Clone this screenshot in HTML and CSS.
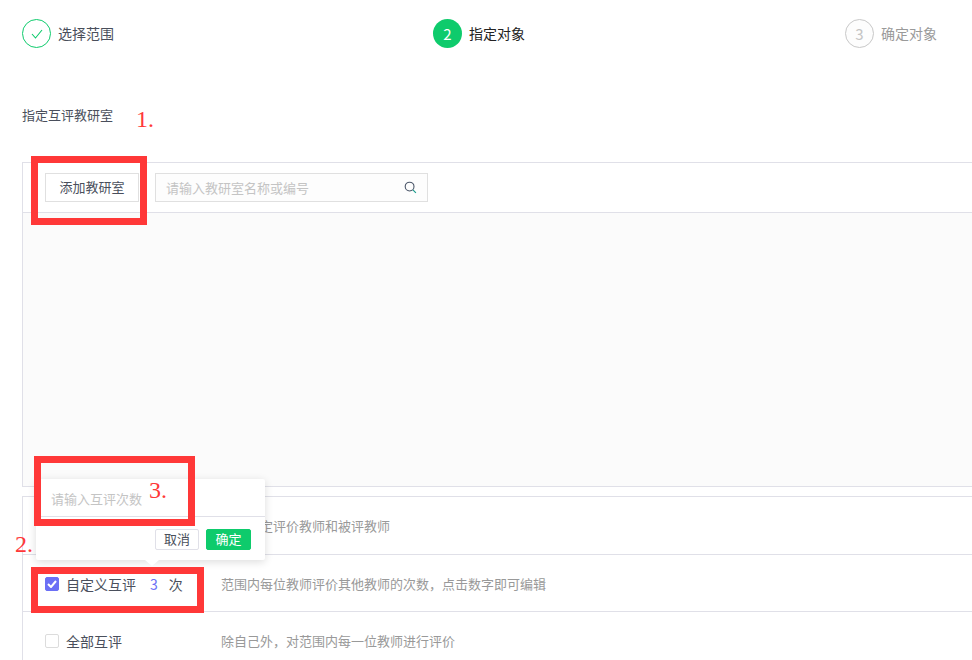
FILE: index.html
```html
<!DOCTYPE html>
<html lang="zh-CN">
<head>
    <meta charset="UTF-8">
    <meta name="viewport" content="width=device-width, initial-scale=1.0">
    <title>指定对象</title>
    <link rel="stylesheet" href="styles.css">
</head>
<body>
    <div class="page">
        <div class="steps">
            <div class="step step-done">
                <div class="step-circle">
                    <svg width="12" height="10" viewBox="0 0 12 10"><path d="M1 5l3.5 4L11 1" fill="none" stroke="#0ecb6c" stroke-width="1.1"/></svg>
                </div>
                <span class="step-label">选择范围</span>
            </div>
            <div class="step step-active">
                <div class="step-circle">2</div>
                <span class="step-label">指定对象</span>
            </div>
            <div class="step step-todo">
                <div class="step-circle">3</div>
                <span class="step-label">确定对象</span>
            </div>
        </div>

        <div class="section-title">指定互评教研室</div>

        <div class="panel">
            <div class="toolbar">
                <button class="btn-add">添加教研室</button>
                <div class="search-box">
                    <span class="placeholder">请输入教研室名称或编号</span>
                    <svg width="13" height="13" viewBox="0 0 13 13"><circle cx="5.6" cy="5.6" r="4.4" fill="none" stroke="#4a5568" stroke-width="1.1"/><path d="M8.9 8.9l3 3" stroke="#1a9c8c" stroke-width="1.2"/></svg>
                </div>
            </div>
            <div class="panel-body"></div>
        </div>

        <div class="options">
            <div class="option option-first">
                <div class="option-main">
                    <span class="checkbox"></span>
                    <span>手动互评</span>
                </div>
                <div class="option-desc">手动指定评价教师和被评教师</div>
            </div>
            <div class="option">
                <div class="option-main">
                    <span class="checkbox checked">
                        <svg width="10" height="8" viewBox="0 0 10 8"><path d="M1 4l3 3 5-6" fill="none" stroke="#fff" stroke-width="2"/></svg>
                    </span>
                    <span>自定义互评</span>
                    <span class="count">3</span>
                    <span>次</span>
                </div>
                <div class="option-desc">范围内每位教师评价其他教师的次数，点击数字即可编辑</div>
            </div>
            <div class="option">
                <div class="option-main">
                    <span class="checkbox"></span>
                    <span>全部互评</span>
                </div>
                <div class="option-desc">除自己外，对范围内每一位教师进行评价</div>
            </div>
        </div>
    </div>

    <div class="popover">
        <div class="popover-input">请输入互评次数</div>
        <div class="popover-footer">
            <button class="btn-cancel">取消</button>
            <button class="btn-ok">确定</button>
        </div>
    </div>

    <!-- 标注 -->
    <div class="mark mark-1"></div>
    <div class="mark mark-2"></div>
    <div class="mark mark-3"></div>
    <div class="mark-num num-1">1.</div>
    <div class="mark-num num-2">2.</div>
    <div class="mark-num num-3">3.</div>
</body>
</html>
```

FILE: styles.css
```css
html, body {
    margin: 0;
    padding: 0;
    height: 660px;
    overflow: hidden;
    background-color: #fff;
}
body {
    position: relative;
    font-family: "Noto Sans CJK SC", "Noto Sans", sans-serif;
    font-size: 13px;
    color: #4a4f5c;
}
.page {
    width: 1256px;
    padding: 19px 0 0 22px;
}
.steps {
    display: grid;
    grid-template-columns: 411px 412px 411px;
}
.step {
    display: flex;
    align-items: center;
    gap: 7px;
    height: 29px;
    font-size: 14px;
}
.step-label {
    padding-bottom: 2px;
}
.step-circle {
    width: 29px;
    height: 29px;
    box-sizing: border-box;
    border-radius: 50%;
    display: flex;
    align-items: center;
    justify-content: center;
    font-size: 15px;
}
.step-done .step-circle {
    border: 1px solid #0ecb6c;
}
.step-active .step-circle {
    background-color: #0ecb6c;
    color: #fff;
}
.step-active span {
    color: #222;
}
.step-todo .step-circle {
    border: 1px solid #c8c8c8;
    color: #c4c4c4;
    background-color: #fdfdfd;
}
.step-todo {
    color: #9a9a9a;
}
.section-title {
    margin-top: 57px;
    height: 20px;
    line-height: 20px;
}
.panel {
    margin-top: 37px;
    border: 1px solid #e0e0e8;
    height: 323px;
    display: flex;
    flex-direction: column;
}
.toolbar {
    display: flex;
    gap: 16px;
    align-items: center;
    height: 49px;
    padding-left: 22px;
    border-bottom: 1px solid #e0e0e8;
    flex: none;
}
.btn-add {
    width: 94px;
    height: 29px;
    border: 1px solid #e0e0e0;
    background-color: #fff;
    font-family: inherit;
    font-size: 13px;
    line-height: 26px;
    color: #4a4f5c;
    padding: 0 0 2px;
}
.search-box {
    width: 273px;
    height: 29px;
    box-sizing: border-box;
    border: 1px solid #e0e0e0;
    background-color: #fdfdfd;
    display: flex;
    align-items: center;
    justify-content: space-between;
    padding: 0 10px;
}
.placeholder {
    color: #c4c4c4;
}
.panel-body {
    flex: 1;
    background-color: #fbfbfb;
}
.options {
    margin-top: 9px;
    border-top: 1px solid #e0e0e8;
    border-left: 1px solid #e0e0e8;
}
.option {
    display: flex;
    align-items: center;
    height: 56px;
    border-bottom: 1px solid #e0e0e8;
    padding-left: 22px;
}
.option-first {
    height: 57px;
}
.option-main {
    width: 176px;
    display: flex;
    align-items: center;
    gap: 7px;
    padding-top: 2px;
    font-size: 14px;
    color: #4a4f5c;
}
.option-desc {
    color: #999;
}
.checkbox {
    width: 14px;
    height: 14px;
    box-sizing: border-box;
    border: 1px solid #dcdcdc;
    border-radius: 2px;
    display: flex;
    align-items: center;
    justify-content: center;
    background-color: #fff;
}
.checkbox.checked {
    background-color: #6b6ff5;
    border-color: #6b6ff5;
}
.count {
    color: #6b6ff5;
    margin: 0 4px 0 7px;
}
.popover {
    position: absolute;
    left: 36px;
    top: 479px;
    width: 229px;
    height: 81px;
    background-color: #fff;
    border-radius: 2px;
    box-shadow: 0 2px 8px rgba(0,0,0,0.14);
}
.popover::after {
    content: "";
    position: absolute;
    left: 109px;
    bottom: -6px;
    width: 0;
    height: 0;
    border-left: 7px solid transparent;
    border-right: 7px solid transparent;
    border-top: 6px solid #fff;
}
.popover-input {
    height: 37px;
    line-height: 40px;
    padding-left: 15px;
    color: #c4c4c4;
    border-bottom: 1px solid #e0e0e8;
}
.popover-footer {
    display: flex;
    justify-content: flex-end;
    gap: 7px;
    padding: 12px 14px 0 0;
}
.btn-cancel, .btn-ok {
    width: 44px;
    height: 21px;
    padding: 0 0 2px;
    font-family: inherit;
    font-size: 13px;
    line-height: 16px;
    border-radius: 2px;
}
.btn-cancel {
    background-color: #fff;
    border: 1px solid #e0e0e8;
    color: #4a4f5c;
}
.btn-ok {
    width: 45px;
    background-color: #0ecb6c;
    border: 1px solid #0ecb6c;
    color: #fff;
}
.mark {
    position: absolute;
    box-sizing: border-box;
    border: 7px solid #ff3838;
}
.mark-1 {
    left: 31px;
    top: 156px;
    width: 116px;
    height: 69px;
}
.mark-2 {
    left: 31px;
    top: 567px;
    width: 173px;
    height: 46px;
}
.mark-3 {
    left: 34px;
    top: 456px;
    width: 161px;
    height: 70px;
}
.mark-num {
    position: absolute;
    font-family: "Liberation Serif", serif;
    font-size: 24px;
    line-height: 28px;
    color: #ff3838;
}
.num-1 {
    left: 136px;
    top: 105px;
}
.num-2 {
    left: 15px;
    top: 530px;
}
.num-3 {
    left: 149px;
    top: 476px;
}
```
